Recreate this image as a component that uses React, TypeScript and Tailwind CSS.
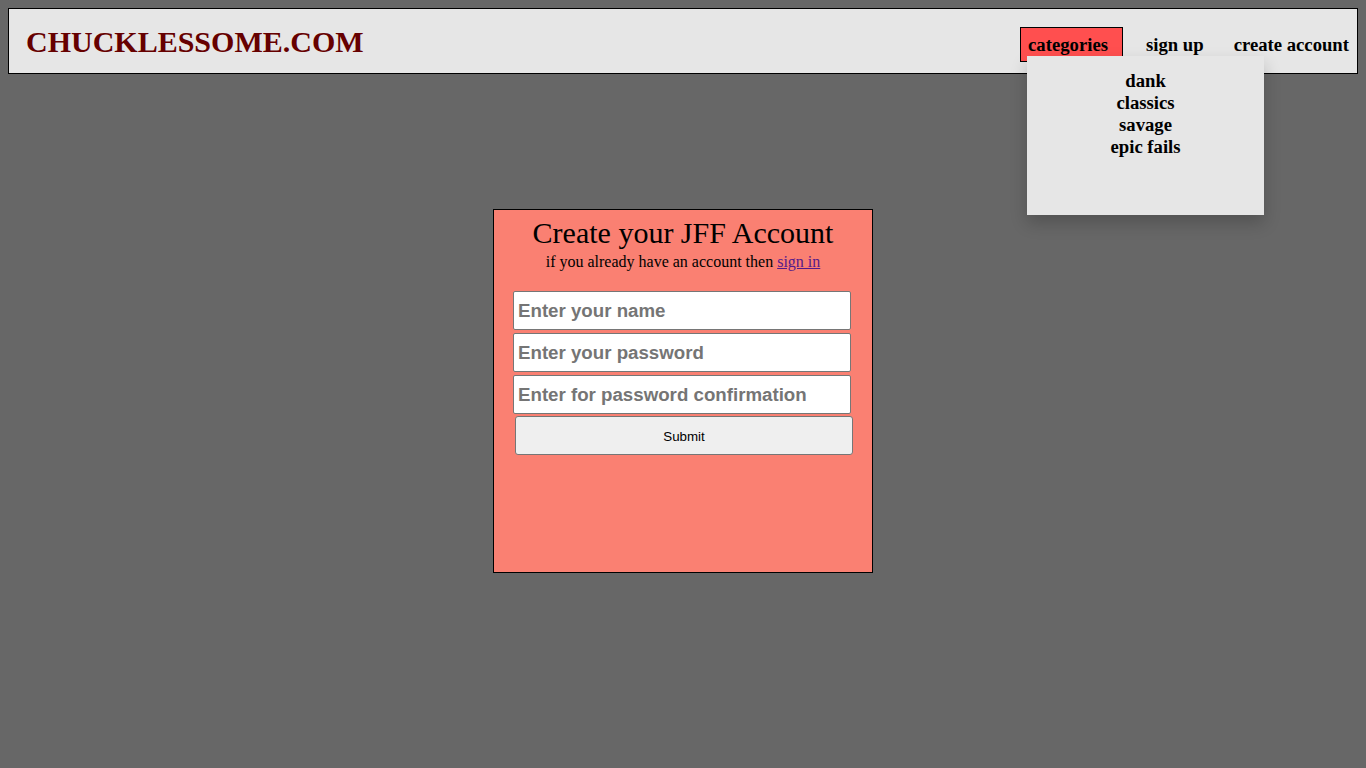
export default function App() {
  const categories = ["dank", "classics", "savage", "epic fails"];

  return (
    <div className="min-h-screen bg-[#676767] p-2 font-['Liberation_Serif',serif]">
      {/* top bar */}
      <header className="flex h-[66px] items-center justify-between border border-black bg-[#e6e6e6] pl-[17px]">
        <h1 className="text-[30px] font-bold leading-normal text-[#660000]">CHUCKLESSOME.COM</h1>
        <nav className="flex items-start self-start mt-[18px] pr-[8px] text-[18.7px] font-bold leading-[21.5px] text-black">
          <div className="relative">
            <div className="h-[35px] border border-black bg-[#ff4f4f] pl-[7px] pr-[14px] pt-[6px]">
              categories
            </div>
            <div className="absolute left-[7px] top-[29px] z-10 flex h-[159px] w-[237px] flex-col items-center bg-[#e6e6e6] pt-[14px] leading-[22px] shadow-[0px_8px_16px_0px_rgba(0,0,0,0.2)]">
              {categories.map((c) => (
                <a key={c} href="#">
                  {c}
                </a>
              ))}
            </div>
          </div>
          <a href="#" className="ml-[23px] pt-[7px]">
            sign up
          </a>
          <a href="#" className="ml-[30px] pt-[7px]">
            create account
          </a>
        </nav>
      </header>

      {/* sign up card */}
      <div className="mx-auto mt-[135px] h-[364px] w-[380px] border border-black bg-[#fa8072] pt-[6px] text-center">
        <h2 className="text-[30px] leading-[34.5px] font-normal text-black">Create your JFF Account</h2>
        <p className="mt-[2px] text-[16px] leading-[18.4px] text-black">
          if you already have an account then{" "}
          <a href="#" className="text-[#551a8b] underline">
            sign in
          </a>
        </p>
        <form className="mt-[20px] flex flex-col items-start pl-[19px] font-['Liberation_Sans',Arial,sans-serif]">
          <input
            type="text"
            placeholder="Enter your name"
            className="mb-[3px] h-[39px] w-[338px] rounded-[2px] border border-[#767676] bg-white px-[4px] pt-[2px] text-[18.7px] font-bold placeholder:text-[#757575] outline-none"
          />
          <input
            type="password"
            placeholder="Enter your password"
            className="mb-[3px] h-[39px] w-[338px] rounded-[2px] border border-[#767676] bg-white px-[4px] pt-[2px] text-[18.7px] font-bold placeholder:text-[#757575] outline-none"
          />
          <input
            type="password"
            placeholder="Enter for password confirmation"
            className="mb-[2px] h-[39px] w-[338px] rounded-[2px] border border-[#767676] bg-white px-[4px] pt-[2px] text-[18.7px] font-bold placeholder:text-[#757575] outline-none"
          />
          <button
            type="submit"
            className="ml-[2px] h-[39px] w-[338px] rounded-[3px] border border-[#767676] bg-[#efefef] pt-[3px] text-[13.33px] text-black"
          >
            Submit
          </button>
        </form>
      </div>
    </div>
  );
}
